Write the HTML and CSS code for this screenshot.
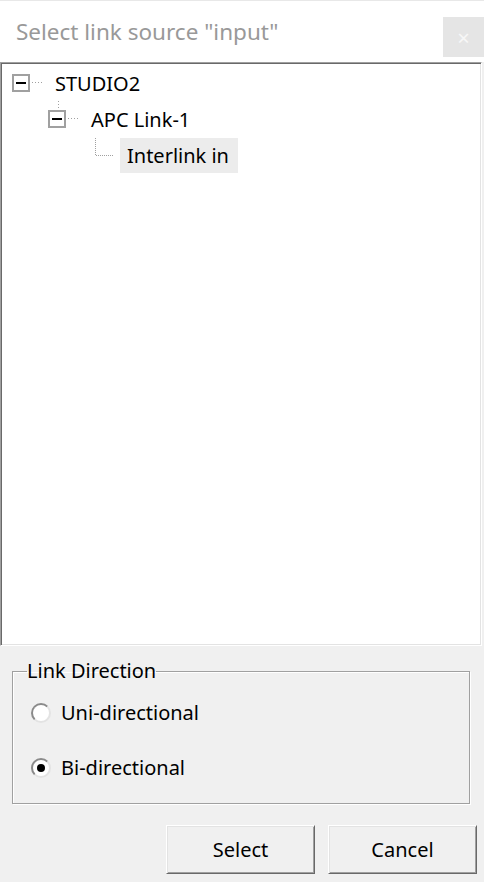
FILE: index.html
```html
<!DOCTYPE html>
<html>
<head>
	<title>Select link source</title>
	<meta charset="utf-8">
	<meta name="viewport" content="width=device-width, initial-scale=1.0">
	<link rel="stylesheet" href="styles.css">
</head>
<body>

<div class="dialog">
	<div class="titlebar">
		<span class="title">Select link source "input"</span>
		<span class="close">&times;</span>
	</div>

	<div class="tree">
		<div class="row lvl0">
			<svg class="conn" width="38" height="36" viewBox="0 0 38 36">
				<rect x="3" y="10" width="16" height="16" fill="#fff" stroke="#a0a0a0" stroke-width="2"/>
				<path d="M6 18h10" stroke="#000" stroke-width="2"/>
				<path d="M22 17.5h12" stroke="#a0a0a0" stroke-dasharray="1 2"/>
			</svg>
			<span class="label">STUDIO2</span>
		</div>
		<div class="row lvl1">
			<svg class="conn" width="38" height="36" viewBox="0 0 38 36">
				<path d="M12.5 0v9" stroke="#a0a0a0" stroke-dasharray="1 2"/>
				<rect x="3" y="10" width="16" height="16" fill="#fff" stroke="#a0a0a0" stroke-width="2"/>
				<path d="M6 18h10" stroke="#000" stroke-width="2"/>
				<path d="M22 17.5h12" stroke="#a0a0a0" stroke-dasharray="1 2"/>
			</svg>
			<span class="label">APC Link-1</span>
		</div>
		<div class="row lvl2">
			<svg class="conn" width="38" height="36" viewBox="0 0 38 36">
				<path d="M13.5 1v18" stroke="#a0a0a0" stroke-dasharray="1 1"/>
				<path d="M14 18.5h17" stroke="#a0a0a0" stroke-dasharray="1 1"/>
			</svg>
			<span class="label selected">Interlink in</span>
		</div>
	</div>

	<fieldset class="direction">
		<legend>Link Direction</legend>
		<label class="radio"><span class="dot"></span>Uni-directional</label>
		<label class="radio"><span class="dot on"></span>Bi-directional</label>
	</fieldset>

	<div class="buttons">
		<button type="button">Select</button>
		<button type="button">Cancel</button>
	</div>
</div>

</body>
</html>
```

FILE: styles.css
```css
body {
	margin: 0;
	font-family: "Noto Sans", "Open Sans", sans-serif;
	background: #f0f0f0;
	color: #000;
}
.dialog {
	width: 484px;
	height: 882px;
	display: flex;
	flex-direction: column;
	background: #f0f0f0;
}
.titlebar {
	height: 61px;
	flex: none;
	background: #fff;
	border-top: 1px solid #e8e8e8;
	display: flex;
	align-items: flex-start;
	justify-content: space-between;
}
.title {
	margin: 15px 0 0 16px;
	font-size: 22.5px;
	color: #999;
}
.close {
	margin-top: 16px;
	width: 41px;
	height: 40px;
	background: #e5e5e5;
	color: #f7f7f7;
	font-size: 22px;
	line-height: 40px;
	text-align: center;
}
.tree {
	height: 580px;
	flex: none;
	margin-right: 2px;
	padding-top: 2px;
	background: #fff;
	border: 1px solid;
	border-color: #a0a0a0 #fff #fff #a0a0a0;
	box-shadow: inset 1px 1px #696969, inset -1px -1px #e3e3e3;
}
.row {
	display: flex;
	align-items: center;
	height: 36px;
}
.lvl0 { padding-left: 9px; }
.lvl1 { padding-left: 45px; }
.lvl2 { padding-left: 81px; }
.conn {
	flex: none;
	display: block;
}
.label {
	font-size: 20px;
	padding: 0 9px 0 7px;
	line-height: 35px;
}
.label.selected {
	background: #ececec;
}
.direction {
	flex: none;
	margin: 11px 14px 0 12px;
	padding: 17px 0 0 18px;
	height: 147px;
	box-sizing: border-box;
	border: 1px solid #a0a0a0;
	box-shadow: 1px 1px #fff, inset 1px 1px #fff;
	display: flex;
	flex-direction: column;
	gap: 33px;
}
.direction legend {
	font-size: 20px;
	line-height: 28px;
	padding: 0;
	margin-left: -4px;
}
.radio {
	display: flex;
	align-items: center;
	gap: 10px;
	font-size: 20px;
	line-height: 22px;
}
.dot {
	width: 16px;
	height: 16px;
	border-radius: 50%;
	background: #fff;
	border: 2px solid #8a8a8a;
	border-right-color: #e3e3e3;
	border-bottom-color: #e3e3e3;
	display: flex;
	align-items: center;
	justify-content: center;
}
.dot.on::after {
	content: "";
	width: 8px;
	height: 8px;
	border-radius: 50%;
	background: #000;
}
.buttons {
	display: flex;
	justify-content: flex-end;
	gap: 13px;
	margin: 21px 7px 0 0;
}
.buttons button {
	width: 149px;
	height: 49px;
	font-family: inherit;
	font-size: 20px;
	color: #000;
	background: #f0f0f0;
	border: 1px solid;
	border-color: #fff #696969 #696969 #fff;
	box-shadow: inset 1px 1px #e3e3e3, inset -1px -1px #a0a0a0;
	padding: 0;
}
```
